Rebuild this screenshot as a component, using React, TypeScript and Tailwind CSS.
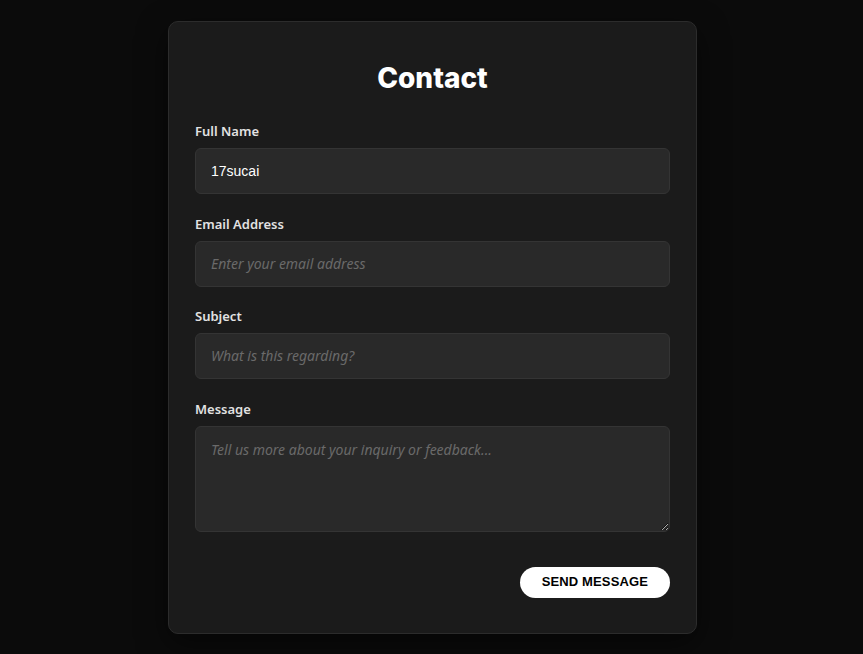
export default function App() {
  const fields = [
    { label: "Full Name", placeholder: "Enter your full name", value: "17sucai" },
    { label: "Email Address", placeholder: "Enter your email address", value: "" },
    { label: "Subject", placeholder: "What is this regarding?", value: "" },
  ];

  return (
    <main className="min-h-screen bg-[#0b0b0b] flex justify-center pl-[2px] pt-[21px] pb-5 font-['Noto_Sans',sans-serif]">
      <form className="w-[529px] bg-[#1b1b1b] border border-[#2c2c2c] rounded-[10px] shadow-[0_10px_30px_rgba(0,0,0,0.5)] px-[26px] pt-[39px] pb-[35px]">
        <h1 className="text-center text-white text-[28px] leading-[34px] font-extrabold font-['Inter',sans-serif] mb-[28px]">
          Contact
        </h1>

        {fields.map((f) => (
          <div key={f.label} className="mb-[21.5px]">
            <label className="block text-[13px] leading-[17px] font-semibold text-[#e2e2e2] mb-[8px]">
              {f.label}
            </label>
            <input
              defaultValue={f.value}
              placeholder={f.placeholder}
              className="w-full h-[46px] rounded-[6px] bg-[#292929] border border-[#343434] px-[15px] text-[14px] text-white font-['Liberation_Sans',sans-serif] placeholder:text-[#6a6a6a] placeholder:italic placeholder:font-['Noto_Sans',sans-serif] outline-none"
            />
          </div>
        ))}

        <div>
          <label className="block text-[13px] leading-[17px] font-semibold text-[#e2e2e2] mb-[8px]">
            Message
          </label>
          <textarea
            placeholder="Tell us more about your inquiry or feedback..."
            className="block w-full h-[106px] rounded-[6px] bg-[#292929] border border-[#343434] px-[15px] py-[12px] text-[14px] text-white placeholder:text-[#6a6a6a] placeholder:italic outline-none resize-y"
          />
        </div>

        <div className="flex justify-end mt-[35px]">
          <button
            type="button"
            className="h-[31px] px-[22px] rounded-full bg-white text-black text-[13px] font-bold tracking-[0.01em] font-['Liberation_Sans',sans-serif]"
          >
            SEND MESSAGE
          </button>
        </div>
      </form>
    </main>
  );
}
